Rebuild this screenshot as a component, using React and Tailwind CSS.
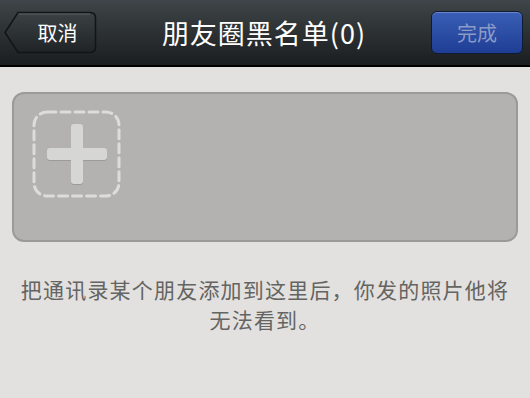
const font = { fontFamily: '"Noto Sans CJK SC", "Liberation Sans", sans-serif' }

const BackButton = () => (
  <button className="relative flex h-[43px] w-[93px] items-center justify-center pl-[14px] text-[20px] text-white" style={font}>
    <svg className="absolute inset-0" width="93" height="43" viewBox="0 0 93 43">
      <defs>
        <linearGradient id="bk" x1="0" y1="0" x2="0" y2="1">
          <stop offset="0" stopColor="#3b4144" />
          <stop offset="1" stopColor="#1f2326" />
        </linearGradient>
      </defs>
      <path d="M1 21.5 L14 1.5 H86 Q91.5 1.5 91.5 7 V36 Q91.5 41.5 86 41.5 H14 Z" fill="url(#bk)" stroke="#121415" strokeWidth="1.5" />
      <path d="M14.5 3 H86" stroke="#5a6063" strokeWidth="1" />
    </svg>
    <span className="relative">取消</span>
  </button>
)

const App = () => {
  return (
    <div className="h-[398px] w-[530px] overflow-hidden bg-[#e2e1df]" style={font}>
      <header className="flex h-[67px] items-center justify-between border-b-2 border-black bg-gradient-to-b from-[#3f4548] to-[#1b1e20] px-[4px] pr-[7px]">
        <BackButton />
        <h1 className="pt-[1px] text-[27px] tracking-[1px] text-white">朋友圈黑名单(0)</h1>
        <button className="flex h-[43px] w-[92px] items-center justify-center rounded-[6px] border border-[#0f1a33] bg-gradient-to-b from-[#3a5fb6] to-[#1f3d94] text-[20px] text-[#8c9cc7] shadow-[inset_0_1px_0_#6a86c8]">
          完成
        </button>
      </header>

      <div className="px-[12px] pt-[25px]">
        <div className="h-[150px] rounded-[12px] border-2 border-[#9b9a98] bg-[#b3b2b0] pl-[18px] pt-[16px]">
          <div className="relative flex h-[88px] w-[89px] items-center justify-center">
            <svg className="absolute inset-0" width="89" height="88" viewBox="0 0 89 88">
              <rect x="2" y="2" width="85" height="84" rx="13" fill="none" stroke="#dcdcda" strokeWidth="3" strokeDasharray="9 5" strokeLinecap="round" />
            </svg>
            <div className="relative h-[60px] w-[60px]">
              <div className="absolute left-0 top-[24px] h-[12px] w-[60px] rounded-[3px] bg-[#d6d6d4] shadow-[0_1px_0_#9c9b99]" />
              <div className="absolute left-[24px] top-0 h-[60px] w-[12px] rounded-[3px] bg-[#d6d6d4] shadow-[0_1px_0_#9c9b99]" />
            </div>
          </div>
        </div>
      </div>

      <p className="mt-[32px] whitespace-nowrap text-center text-[21px] leading-[30px] tracking-[1.2px] text-[#646462]">
        把通讯录某个朋友添加到这里后，你发的照片他将
        <br />
        无法看到。
      </p>
    </div>
  )
}

export default App
